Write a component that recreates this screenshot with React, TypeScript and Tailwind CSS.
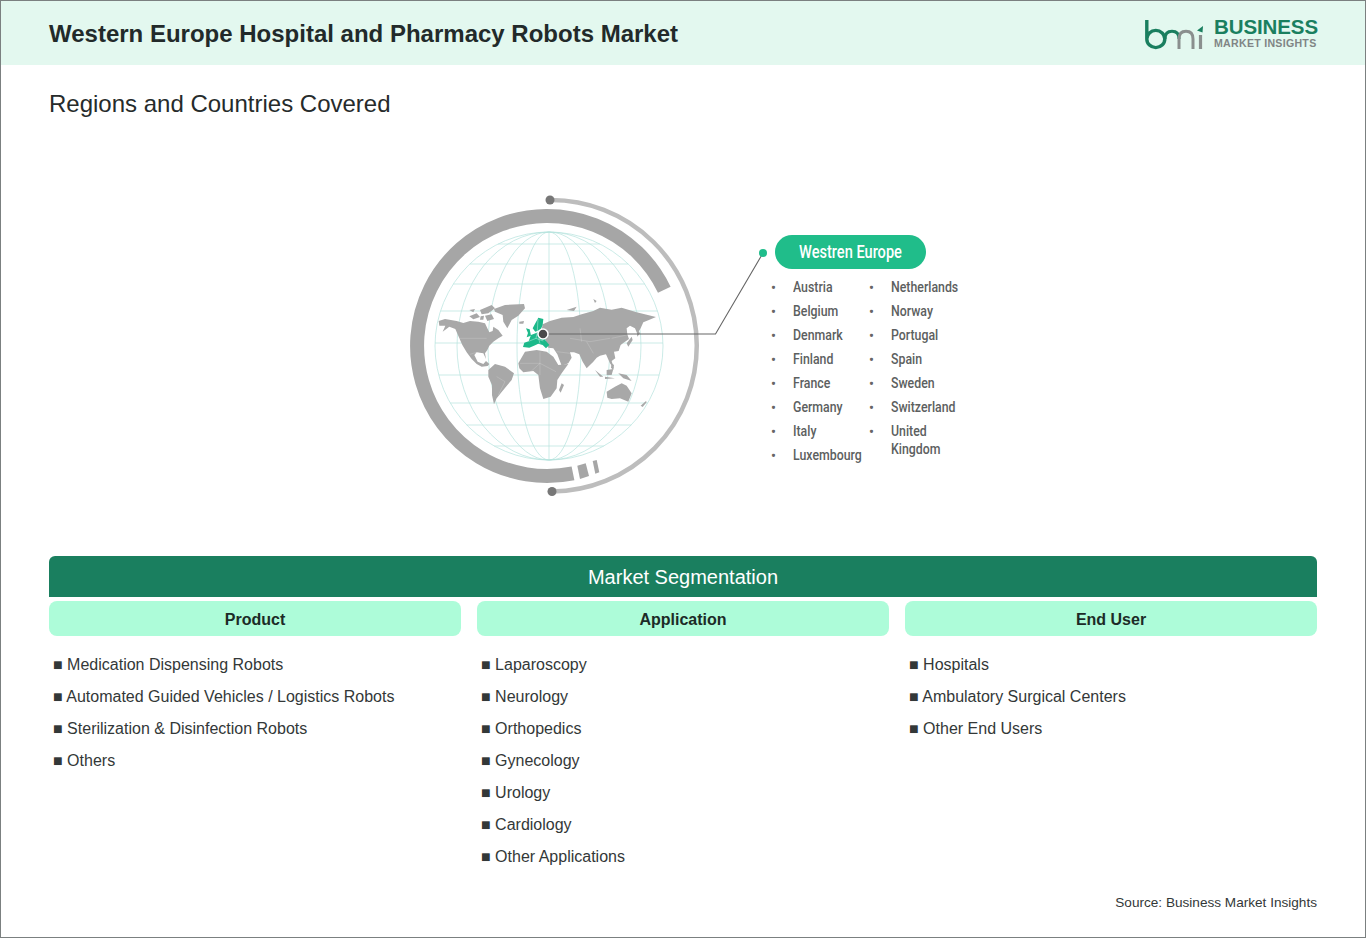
const FONT = "font-['Liberation_Sans',Arial,sans-serif]";

const left = ["Austria", "Belgium", "Denmark", "Finland", "France", "Germany", "Italy", "Luxembourg"];
const right = ["Netherlands", "Norway", "Portugal", "Spain", "Sweden", "Switzerland", "United Kingdom"];

const columns = [
  { title: "Product", items: ["Medication Dispensing Robots", "Automated Guided Vehicles / Logistics Robots", "Sterilization & Disinfection Robots", "Others"] },
  { title: "Application", items: ["Laparoscopy", "Neurology", "Orthopedics", "Gynecology", "Urology", "Cardiology", "Other Applications"] },
  { title: "End User", items: ["Hospitals", "Ambulatory Surgical Centers", "Other End Users"] },
];

function Logo() {
  return (
    <div className="flex items-center gap-[10px]">
      <svg width="60" height="34" viewBox="1145 15 60 34" fill="none">
        <path d="M1147.8 18 V37 A9 8.6 0 1 0 1156.8 28.4 A9 8.6 0 0 0 1147.8 37" stroke="#1a7f5f" strokeWidth="3.4" />
        <path d="M1166 37 Q1166 29.2 1173 29.2 Q1180 29.2 1180 37" stroke="#1a7f5f" strokeWidth="3" />
        <path d="M1180 47 V37 Q1180 29.2 1187 29.2 Q1194 29.2 1194 37 V47" stroke="#8a8f8e" strokeWidth="3" />
        <path d="M1201.5 33 V47" stroke="#8a8f8e" strokeWidth="3.2" />
        <path d="M1198 28.5 L1204 24 L1203.5 30.5 Z" fill="#1a7f5f" />
      </svg>
      <div className="mt-[-3px] flex flex-col">
        <span className="text-[20.5px] leading-[20px] font-bold text-[#1a7f5f] tracking-[-0.1px]">BUSINESS</span>
        <span className="text-[10.6px] leading-[12px] font-bold text-[#808585] tracking-[0.28px]">MARKET INSIGHTS</span>
      </div>
    </div>
  );
}

function Globe() {
  const parallels = [244, 264, 284, 311, 343, 375, 403, 425, 446];
  const cx = 549;
  const cy = 346;
  const r = 114;
  return (
    <svg width="370" height="310" viewBox="400 190 370 310" fill="none" className="shrink-0">
      {/* graticule */}
      <g stroke="#b4e2dc" strokeWidth="0.7">
        {parallels.map((y) => {
          const dx = Math.sqrt(Math.max(0, r * r - (y - cy) * (y - cy)));
          return <line key={y} x1={cx - dx} x2={cx + dx} y1={y} y2={y} />;
        })}
        <circle cx={cx} cy={cy} r={r} />
        <ellipse cx={cx} cy={cy} rx={92} ry={r} />
        <ellipse cx={cx} cy={cy} rx={61} ry={r} />
        <ellipse cx={cx} cy={cy} rx={32} ry={r} />
        <line x1={cx} x2={cx} y1={cy - r} y2={cy + r} />
      </g>

      {/* outer rings */}
      <path d="M664.3 289.7 A130 130 0 1 0 573 473.3" stroke="#a6a6a6" strokeWidth="14" />
      <path d="M577.3 465.7 L585.7 463.3 L589 476 L580 479 Z" fill="#a6a6a6" />
      <path d="M592.7 461 L596.7 460 L599.3 472.3 L595.3 473.7 Z" fill="#a6a6a6" />
      <path d="M550 200 A145.75 145.75 0 0 1 552 491.5" stroke="#bdbdbd" strokeWidth="4.5" />
      <circle cx="550" cy="200" r="4.5" fill="#777" />
      <circle cx="552" cy="491.5" r="4.5" fill="#777" />

      {/* map, traced at 3x from (430,295) */}
      <g transform="translate(430 295) scale(0.3333)">
        <g fill="#a8a8a8">
          <path d="M26 78 L45 72 L80 78 L100 84 L120 78 L145 80 L165 85 L172 100 L178 112 L188 108 L190 95 L205 105 L218 122 L205 130 L190 140 L178 152 L172 165 L165 175 L168 192 L160 175 L140 172 L133 180 L143 200 L160 207 L168 198 L178 207 L173 213 L155 215 L140 207 L125 192 L110 172 L97 150 L88 130 L76 102 L58 95 L38 110 L46 92 L28 92 Z" />
          <path d="M192 42 L225 30 L282 27 L285 40 L265 62 L245 75 L232 100 L220 80 L218 60 L195 50 Z" />
          <path d="M118 64 L140 55 L150 66 L130 73 Z M150 45 L185 30 L195 40 L175 55 L155 58 Z M165 62 L185 58 L192 72 L172 78 Z M118 45 L135 42 L130 52 Z M152 64 L162 62 L160 74 L150 74 Z" />
          <path d="M175 225 L195 207 L225 215 L252 235 L245 255 L228 275 L212 295 L200 310 L192 328 L186 300 L186 270 L175 245 Z" />
          <path d="M265 205 L285 170 L320 165 L350 170 L370 185 L385 210 L415 207 L395 235 L382 255 L380 280 L362 305 L340 312 L330 280 L325 240 L310 228 L280 232 L268 220 Z" />
          <path d="M395 265 L402 270 L392 293 L387 285 Z" />
          <path d="M338 88 L360 78 L395 68 L430 66 L455 58 L490 48 L510 38 L545 44 L575 38 L620 52 L678 66 L655 76 L640 82 L632 100 L622 116 L615 100 L600 92 L590 100 L592 118 L597 132 L583 142 L572 150 L566 168 L552 170 L556 190 L545 198 L552 222 L540 205 L528 178 L510 182 L500 188 L490 200 L470 220 L458 200 L448 178 L432 172 L420 172 L425 188 L415 205 L395 212 L382 178 L370 160 L355 158 L350 145 L342 125 L335 105 Z" />
          <path d="M490 12 L500 18 L495 24 Z M410 45 L440 35 L432 48 Z" />
          <path d="M620 100 L630 115 L622 125 Z M590 145 L605 125 L608 135 L595 155 Z" />
          <path d="M495 225 L520 245 L510 245 Z M525 245 L555 250 L525 252 Z M530 225 L550 222 L545 240 L530 240 Z M565 235 L590 240 L605 258 L580 250 Z M545 205 L552 210 L550 225 L543 218 Z" />
          <path d="M530 290 L555 275 L575 265 L590 272 L605 295 L595 320 L570 310 L545 312 L532 308 Z" />
          <path d="M632 332 L648 318 L650 322 L638 336 Z" />
          <path d="M268 80 L282 78 L280 86 L268 86 Z" />
        </g>
        <g stroke="#ffffff" strokeWidth="1" fill="none" opacity="0.5">
          <path d="M75 130 H170 M120 178 L140 172 M270 205 H330 M330 170 V240 M300 232 L330 205 L378 230 M380 170 L420 175 M420 130 L480 140 L540 130 M470 140 L490 175 M545 130 L590 120 M450 100 L455 140 M200 245 L225 260 L205 300" />
        </g>
        <g fill="#1cb98a">
          <path d="M325 68 L340 72 L338 90 L332 104 L316 110 L308 100 L316 85 Z" />
          <path d="M288 100 L299 103 L303 122 L290 127 L294 114 Z" />
          <path d="M279 156 L283 143 L296 139 L303 120 L324 112 L342 116 L346 136 L358 150 L348 160 L338 150 L325 146 L312 152 L298 158 Z" />
        </g>
        <path d="M324 72 L322 108 M296 139 L318 130 L340 138 M318 130 L322 112 M330 146 L326 130" stroke="#ffffff" strokeWidth="1.6" fill="none" opacity="0.7" />
      </g>

      {/* connector */}
      <path d="M543 334 H715.5 L763 253" stroke="#666" strokeWidth="1.1" />
      <circle cx="543" cy="334" r="5" fill="#4a4a4a" stroke="#fff" strokeWidth="1.5" />
      <circle cx="763" cy="253" r="4" fill="#1fbd8b" />
    </svg>
  );
}

function Country({ name, wrap }: { name: string; wrap: boolean }) {
  return (
    <li className="flex items-start">
      <span className="w-[22px] shrink-0 text-[14px] leading-[18px] text-[#666]">•</span>
      <span className={`inline-block origin-left scale-x-[0.85] leading-[18px] ${wrap ? "w-[70px]" : "whitespace-nowrap"}`}>{name}</span>
    </li>
  );
}

export default function App() {
  return (
    <div className={`${FONT} flex h-[938px] w-[1366px] flex-col border border-[#7b8080] bg-white`}>
      <header className="flex h-[64px] shrink-0 items-center justify-between bg-[#e3f8ef] pl-[48px] pr-[47px] pt-[2px]">
        <h1 className="text-[24px] font-bold text-[#222a2a]">Western Europe Hospital and Pharmacy Robots Market</h1>
        <Logo />
      </header>

      <h2 className="ml-[48px] mt-[25px] text-[24px] leading-[28px] text-[#262b2b]">Regions and Countries Covered</h2>

      <section className="ml-[399px] mt-[72px] flex h-[366px] items-start">
        <Globe />
        <div className="ml-[5px] mt-[45px] flex flex-col">
          <div className="flex h-[34px] w-[151px] items-center justify-center rounded-full bg-[#20bd8a] pb-[2px] font-['Roboto',sans-serif] text-white">
            <span className="scale-x-[0.81] whitespace-nowrap text-[18px] font-medium">Westren Europe</span>
          </div>
          <div className="ml-[-4px] mt-[10px] flex font-['Roboto',sans-serif] text-[14.5px] font-medium text-[#5c6060]">
            <ul className="flex w-[98px] flex-col gap-[6px]">
              {left.map((n) => (
                <Country key={n} name={n} wrap={false} />
              ))}
            </ul>
            <ul className="flex flex-col gap-[6px]">
              {right.map((n) => (
                <Country key={n} name={n} wrap />
              ))}
            </ul>
          </div>
        </div>
      </section>

      <section className="mx-[48px] flex flex-col">
        <div className="flex h-[41px] items-center justify-center rounded-t-[6px] bg-[#1a7f5f] text-[20px] text-white">Market Segmentation</div>
        <div className="mt-[4px] grid grid-cols-3 gap-[16px]">
          {columns.map((c) => (
            <div key={c.title}>
              <div className="flex h-[35px] items-center justify-center rounded-[8px] bg-[#adfcd9] pt-[2px] text-[16px] font-bold text-[#1c2b27]">{c.title}</div>
              <ul className="mt-[13px] pl-[4px] text-[16px] leading-[32px] text-[#333838]">
                {c.items.map((i) => (
                  <li key={i}>■ {i}</li>
                ))}
              </ul>
            </div>
          ))}
        </div>
      </section>

      <p className="mt-auto mb-[26px] mr-[48px] text-right text-[13.6px] leading-[16px] text-[#333838]">Source: Business Market Insights</p>
    </div>
  );
}
